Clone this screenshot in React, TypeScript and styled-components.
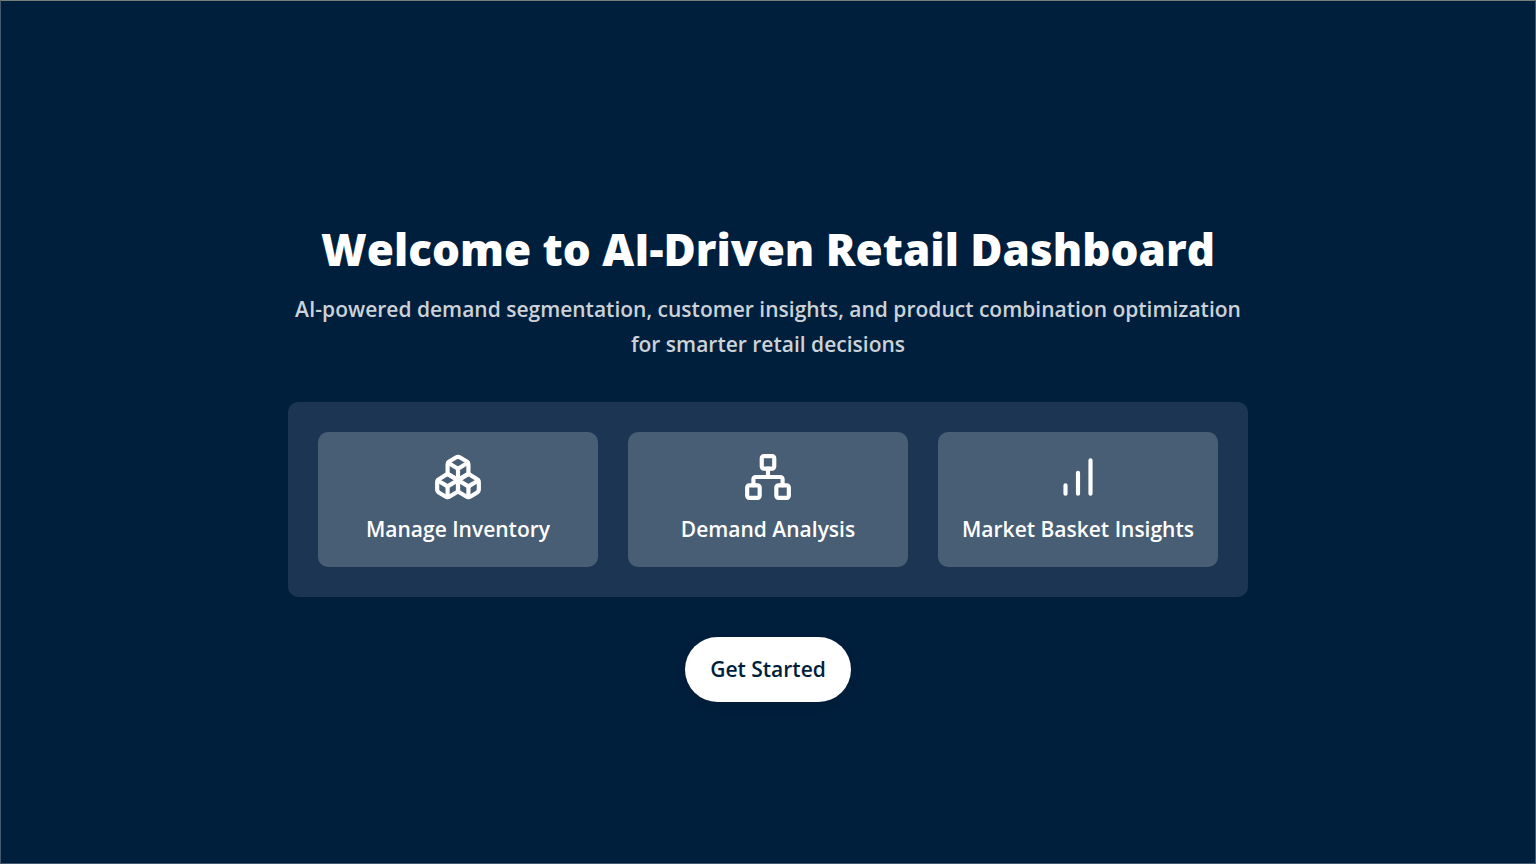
import React from 'react';
import styled, { createGlobalStyle } from 'styled-components';
import { Boxes, Network } from 'lucide-react';

const GlobalStyle = createGlobalStyle`
  *, *::before, *::after { box-sizing: border-box; }
  body {
    margin: 0;
    background: #001f3d;
    color: #fff;
    font-family: "Open Sans", "Noto Sans", sans-serif;
  }
`;

const Page = styled.main`
  min-height: 100vh;
  display: flex;
  flex-direction: column;
  align-items: center;
  justify-content: center;
  padding: 90px 30px 30px;
  border: 1px solid #44596e;
  border-top-color: #75807a;
  text-align: center;
`;

const Title = styled.h1`
  margin: 0 0 15px;
  font-size: 44px;
  line-height: 55px;
  font-weight: 800;
`;

const Subtitle = styled.p`
  margin: 0 0 40px;
  max-width: 960px;
  color: #ccd2d8;
  font-size: 21px;
  line-height: 35px;
  font-weight: 600;
`;

const Panel = styled.section`
  width: 100%;
  max-width: 960px;
  display: grid;
  grid-template-columns: repeat(3, minmax(0, 1fr));
  gap: 30px;
  padding: 30px;
  margin-bottom: 40px;
  border-radius: 10px;
  background: #1b3552;
`;

const Card = styled.article`
  display: flex;
  flex-direction: column;
  align-items: center;
  gap: 10px;
  padding: 20px;
  border-radius: 10px;
  background: #485e74;
`;

const CardTitle = styled.h2`
  margin: 0;
  font-size: 21px;
  line-height: 35px;
  font-weight: 600;
`;

const StartButton = styled.button`
  border: 0;
  border-radius: 40px;
  padding: 15px 25px;
  background: #fff;
  color: #001f3d;
  font-family: inherit;
  font-size: 21px;
  line-height: 35px;
  font-weight: 600;
  box-shadow: 0 4px 10px rgba(0, 0, 0, 0.1);
  cursor: pointer;
`;

function Bars({ size }: { size: number }) {
  return (
    <svg
      width={size}
      height={size}
      viewBox="0 0 24 24"
      fill="none"
      stroke="currentColor"
      strokeWidth="2"
      strokeLinecap="round"
      strokeLinejoin="round"
      aria-hidden="true"
    >
      <path d="M12 20V10M18 20V4M6 20v-4" />
    </svg>
  );
}

const features: { title: string; Icon: React.ElementType }[] = [
  { title: 'Manage Inventory', Icon: Boxes },
  { title: 'Demand Analysis', Icon: Network },
  { title: 'Market Basket Insights', Icon: Bars },
];

export default function App() {
  return (
    <>
      <GlobalStyle />
      <Page>
        <Title>Welcome to AI-Driven Retail Dashboard</Title>
        <Subtitle>
          AI-powered demand segmentation, customer insights, and product combination optimization
          for smarter retail decisions
        </Subtitle>
        <Panel>
          {features.map(({ title, Icon }) => (
            <Card key={title}>
              <Icon size={50} />
              <CardTitle>{title}</CardTitle>
            </Card>
          ))}
        </Panel>
        <StartButton type="button">Get Started</StartButton>
      </Page>
    </>
  );
}
